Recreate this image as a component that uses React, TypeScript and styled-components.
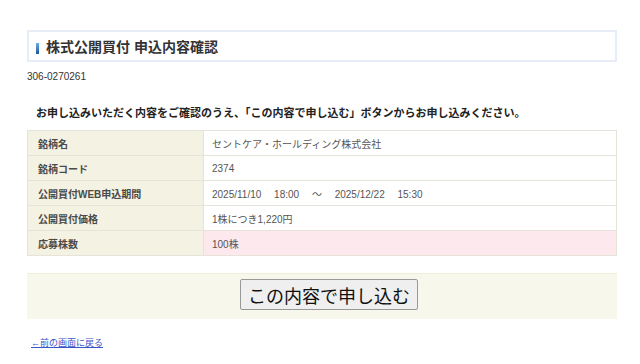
import { FunctionComponent } from 'react'
import styled, { createGlobalStyle } from 'styled-components';

const GlobalStyle = createGlobalStyle`
    html, body {
        margin: 0;
        padding: 0;
        background: #fff;
        font-family: "Liberation Sans", Arial, "Noto Sans CJK JP", sans-serif;
        color: #333;
    }
`;

type Row = {
    label: string;
    value: string;
    highlight?: boolean;
}

const rows: Row[] = [
    { label: '銘柄名', value: 'セントケア・ホールディング株式会社' },
    { label: '銘柄コード', value: '2374' },
    { label: '公開買付WEB申込期間', value: '2025/11/10\u3000 18:00\u3000 ～\u3000 2025/12/22\u3000 15:30' },
    { label: '公開買付価格', value: '1株につき1,220円' },
    { label: '応募株数', value: '100株', highlight: true },
];

const Page = styled.div`
    padding: 30px 23px 0 27px;
    width: 590px;
`;

const TitleBox = styled.div`
    display: flex;
    align-items: center;
    height: 28px;
    border: 2px solid #e6edf7;
    padding-left: 7px;
`;

const TitleBar = styled.span`
    display: inline-block;
    width: 3px;
    height: 11px;
    margin-top: 5px;
    background: linear-gradient(#6aaee8, #1a5799);
    margin-right: 7px;
`;

const Title = styled.h1`
    margin: 0;
    font-size: 14px;
    font-weight: bold;
    color: #333;
`;

const Code = styled.div`
    font-size: 10px;
    color: #333;
    margin-top: 9px;
`;

const Lead = styled.p`
    margin: 22px 0 10px 9px;
    font-size: 11px;
    font-weight: bold;
    color: #222;
`;

const Table = styled.table`
    width: 100%;
    border-collapse: collapse;
    font-size: 10px;
`;

const Label = styled.th`
    width: 165px;
    height: 24px;
    padding: 0 0 0 10px;
    text-align: left;
    font-weight: bold;
    background: #f4f2e2;
    color: #4a4a4a;
    border: 1px solid #e6e4da;
`;

const Value = styled.td<{ $highlight?: boolean }>`
    padding: 0 0 0 8px;
    background: ${p => p.$highlight ? '#fde8ed' : '#fff'};
    color: #555;
    border: 1px solid #e6e4da;
    white-space: pre;
`;

const ButtonArea = styled.div`
    margin-top: 17px;
    height: 46px;
    background: #f8f7ec;
    border-top: 1px solid #efeedb;
    display: flex;
    align-items: flex-start;
    justify-content: center;
    padding-top: 5px;
    box-sizing: border-box;
`;

const SubmitButton = styled.button`
    font-family: "Noto Sans CJK JP", sans-serif;
    font-size: 18px;
    height: 31px;
    padding: 0 7px;
    background: #efefef;
    border: 1px solid #999;
    border-radius: 2px;
    color: #111;
    line-height: 1;
    margin-left: 14px;
`;

const BackLink = styled.a`
    display: inline-block;
    margin: 17px 0 0 4px;
    font-size: 9px;
    color: #3a55c8;
    text-decoration: underline;
`;

const App: FunctionComponent = () => (
    <>
        <GlobalStyle />
        <Page>
            <TitleBox>
                <TitleBar />
                <Title>株式公開買付 申込内容確認</Title>
            </TitleBox>
            <Code>306-0270261</Code>
            <Lead>お申し込みいただく内容をご確認のうえ、「この内容で申し込む」ボタンからお申し込みください。</Lead>
            <Table>
                <tbody>
                    {rows.map(r => (
                        <tr key={r.label}>
                            <Label>{r.label}</Label>
                            <Value $highlight={r.highlight}>{r.value}</Value>
                        </tr>
                    ))}
                </tbody>
            </Table>
            <ButtonArea>
                <SubmitButton>この内容で申し込む</SubmitButton>
            </ButtonArea>
            <BackLink href="#">←前の画面に戻る</BackLink>
        </Page>
    </>
)

export default App;
